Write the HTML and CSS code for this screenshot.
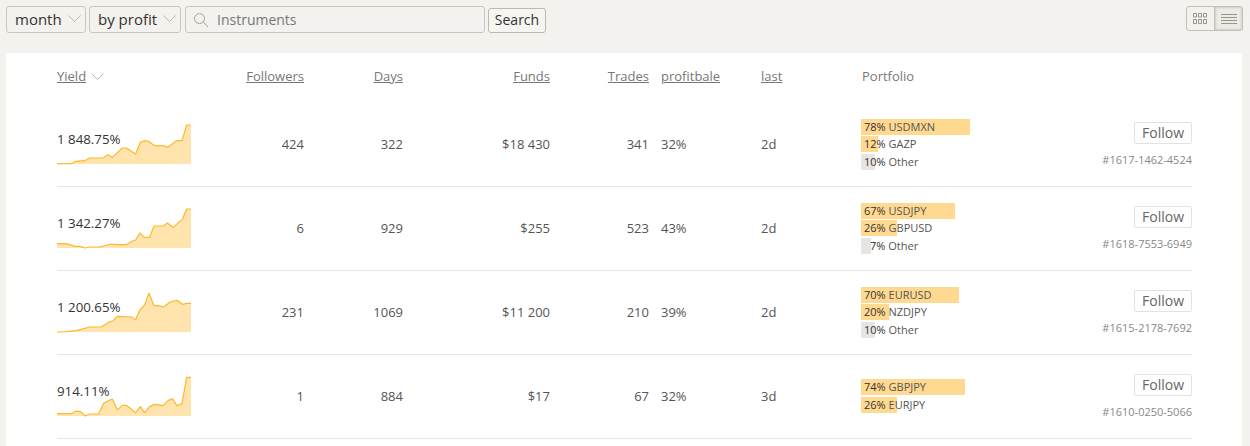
FILE: index.html
```html
<!DOCTYPE html>
<html lang="en">
<head>
<meta charset="utf-8">
<title>Traders</title>
<link rel="stylesheet" href="styles.css">
</head>
<body>
<header class="toolbar">
  <div class="select select-month">month
    <svg class="chev" viewBox="0 0 13 8"><path d="M.5.5l6 6 6-6"/></svg>
  </div>
  <div class="select select-profit">by profit
    <svg class="chev" viewBox="0 0 13 8"><path d="M.5.5l6 6 6-6"/></svg>
  </div>
  <div class="search">
    <svg class="lens" viewBox="0 0 16 16"><circle cx="6.5" cy="6.5" r="5"/><path d="M10.2 10.2l5 5"/></svg>
    <span>Instruments</span>
  </div>
  <button class="search-btn">Search</button>
  <div class="views">
    <div class="view">
      <svg viewBox="0 0 15 11" class="view-icon"><path d="M.5.5h3v3.500h-3zM5.500.5h3v3.500h-3zM10.500.5h3v3.500h-3zM.5 6.500h3v4h-3zM5.500 6.500h3v4h-3zM10.500 6.500h3v4h-3z"/></svg>
    </div>
    <div class="view view-on">
      <svg viewBox="0 0 16 10" class="view-icon view-icon-list"><path d="M0 .5h16M0 3.500h16M0 6.500h16M0 9.500h16"/></svg>
    </div>
  </div>
</header>
<main class="panel">
  <div class="grid head">
    <div><a href="#">Yield</a><svg class="chev chev-head" viewBox="0 0 13 8"><path d="M.5.5l6 6 6-6"/></svg></div>
    <div class="num"><a href="#">Followers</a></div>
    <div class="num"><a href="#">Days</a></div>
    <div class="num"><a href="#">Funds</a></div>
    <div class="num"><a href="#">Trades</a></div>
    <div class="pad"><a href="#">profitbale</a></div>
    <div><a href="#">last</a></div>
    <div class="plain">Portfolio</div>
    <div></div>
  </div>

  <div class="grid row">
    <div class="yield">
      <svg class="spark" viewBox="22 37 402 126">
        <path class="area" d="M22 163L22 162 65 162 78 155 105 153 120 145 160 145 175 135 188 143 218 115 230 115 258 133 272 98 285 93 298 96 315 108 340 108 355 113 380 93 397 93 411 46 424 46 424 163Z"/>
        <path class="line" d="M22 162 65 162 78 155 105 153 120 145 160 145 175 135 188 143 218 115 230 115 258 133 272 98 285 93 298 96 315 108 340 108 355 113 380 93 397 93 411 46 424 46"/>
      </svg>
      <span class="pct">1 848.75%</span>
    </div>
    <div class="num">424</div>
    <div class="num">322</div>
    <div class="num">$18 430</div>
    <div class="num">341</div>
    <div class="pad">32%</div>
    <div>2d</div>
    <div class="folio">
      <div class="alloc"><i class="bar" style="width:109px"></i><span><b>78%</b> USDMXN</span></div>
      <div class="alloc"><i class="bar" style="width:17px"></i><span><b>12%</b> GAZP</span></div>
      <div class="alloc"><i class="bar bar-other" style="width:14px"></i><span><b>10%</b> Other</span></div>
    </div>
    <div class="act"><button class="follow">Follow</button><span class="id">#1617-1462-4524</span></div>
  </div>

  <div class="grid row">
    <div class="yield">
      <svg class="spark" viewBox="22 33 402 126">
        <path class="area" d="M22 159L22 146 50 146 75 154 90 154 107 159 120 156 150 156 185 147 200 149 230 149 245 140 258 135 270 114 285 127 300 127 313 93 340 93 353 84 370 97 398 73 411 42 424 42 424 159Z"/>
        <path class="line" d="M22 146 50 146 75 154 90 154 107 159 120 156 150 156 185 147 200 149 230 149 245 140 258 135 270 114 285 127 300 127 313 93 340 93 353 84 370 97 398 73 411 42 424 42"/>
      </svg>
      <span class="pct">1 342.27%</span>
    </div>
    <div class="num">6</div>
    <div class="num">929</div>
    <div class="num">$255</div>
    <div class="num">523</div>
    <div class="pad">43%</div>
    <div>2d</div>
    <div class="folio">
      <div class="alloc"><i class="bar" style="width:94px"></i><span><b>67%</b> USDJPY</span></div>
      <div class="alloc"><i class="bar" style="width:36px"></i><span><b>26%</b> GBPUSD</span></div>
      <div class="alloc"><i class="bar bar-other" style="width:10px"></i><span><b class="gap">7%</b> Other</span></div>
    </div>
    <div class="act"><button class="follow">Follow</button><span class="id">#1618-7553-6949</span></div>
  </div>

  <div class="grid row">
    <div class="yield">
      <svg class="spark" viewBox="22 31 402 126">
        <path class="area" d="M22 157L22 157 50 156 80 153 120 142 155 142 180 126 190 124 203 110 245 112 258 120 270 92 285 75 298 40 313 78 325 78 342 82 358 69 372 64 383 62 398 74 411 71 424 71 424 157Z"/>
        <path class="line" d="M22 157 50 156 80 153 120 142 155 142 180 126 190 124 203 110 245 112 258 120 270 92 285 75 298 40 313 78 325 78 342 82 358 69 372 64 383 62 398 74 411 71 424 71"/>
      </svg>
      <span class="pct">1 200.65%</span>
    </div>
    <div class="num">231</div>
    <div class="num">1069</div>
    <div class="num">$11 200</div>
    <div class="num">210</div>
    <div class="pad">39%</div>
    <div>2d</div>
    <div class="folio">
      <div class="alloc"><i class="bar" style="width:98px"></i><span><b>70%</b> EURUSD</span></div>
      <div class="alloc"><i class="bar" style="width:28px"></i><span><b>20%</b> NZDJPY</span></div>
      <div class="alloc"><i class="bar bar-other" style="width:14px"></i><span><b>10%</b> Other</span></div>
    </div>
    <div class="act"><button class="follow">Follow</button><span class="id">#1615-2178-7692</span></div>
  </div>

  <div class="grid row">
    <div class="yield">
      <svg class="spark" viewBox="22 27 402 126">
        <path class="area" d="M22 153L22 146 65 146 78 139 92 139 107 153 120 147 147 147 162 115 175 108 188 102 203 135 218 121 230 121 258 143 272 125 285 143 300 125 315 118 340 122 355 107 368 101 382 122 397 116 411 37 424 37 424 153Z"/>
        <path class="line" d="M22 146 65 146 78 139 92 139 107 153 120 147 147 147 162 115 175 108 188 102 203 135 218 121 230 121 258 143 272 125 285 143 300 125 315 118 340 122 355 107 368 101 382 122 397 116 411 37 424 37"/>
      </svg>
      <span class="pct">914.11%</span>
    </div>
    <div class="num">1</div>
    <div class="num">884</div>
    <div class="num">$17</div>
    <div class="num">67</div>
    <div class="pad">32%</div>
    <div>3d</div>
    <div class="folio">
      <div class="alloc"><i class="bar" style="width:104px"></i><span><b>74%</b> GBPJPY</span></div>
      <div class="alloc"><i class="bar" style="width:36px"></i><span><b>26%</b> EURJPY</span></div>
    </div>
    <div class="act"><button class="follow">Follow</button><span class="id">#1610-0250-5066</span></div>
  </div>
</main>
</body>
</html>
```
FILE: styles.css
```css
* { box-sizing: border-box; }
html, body { margin: 0; height: 446px; overflow: hidden; }
body {
  background: #f4f2ee;
  font-family: "Open Sans", sans-serif;
  font-size: 13px;
  color: #555;
}
.toolbar {
  height: 53px;
  padding: 6px 7px 0 6px;
  display: flex;
  align-items: flex-start;
}
.select {
  height: 27px;
  border: 1px solid #c9c6be;
  border-radius: 3px;
  font-size: 15px;
  line-height: 24px;
  color: #333;
  padding-left: 8px;
  padding-bottom: 1px;
  display: flex;
  align-items: center;
  justify-content: space-between;
}
.select-month { width: 80px; margin-right: 3px; padding-right: 4px; }
.select-profit { width: 92px; margin-right: 4px; padding-right: 4px; }
.chev { width: 13px; height: 8px; fill: none; stroke: #bdb9b0; stroke-width: 1; }
.search {
  width: 300px;
  height: 27px;
  border: 1px solid #c9c6be;
  border-radius: 3px;
  display: flex;
  align-items: center;
  padding: 0 0 0 7px;
  font-size: 14px;
  line-height: 20px;
  color: #777;
}
.lens { width: 16px; height: 16px; fill: none; stroke: #a5a29a; stroke-width: 1; margin: 0 8px 0 0; }
.search-btn {
  margin: 2px 0 0 3px;
  width: 58px;
  height: 25px;
  padding: 0 0 2px;
  background: #f6f5f2;
  border: 1px solid #bdbab2;
  border-radius: 3px;
  font: 14px/20px "Open Sans", sans-serif;
  color: #333;
}
.views {
  margin-left: auto;
  display: flex;
  height: 25px;
  border: 1px solid #c4c1b9;
  border-radius: 3px;
}
.view {
  width: 27px;
  display: flex;
  align-items: center;
  justify-content: center;
}
.view-on {
  width: 28px;
  background: #ecebe6;
  border-left: 1px solid #c4c1b9;
  box-shadow: inset 0 0 3px #b5b2aa;
}
.view-icon { width: 15px; height: 11px; fill: none; stroke: #99948a; stroke-width: 1; }
.view-icon-list { width: 16px; height: 10px; }
.panel {
  margin: 0 8px 0 6px;
  background: #fff;
  padding: 0 50px 0 51px;
  height: 393px;
}
.grid {
  display: grid;
  grid-template-columns: 134px 113px 99px 147px 99px 112px 100px 201px 130px;
  align-items: center;
}
.head { height: 50px; padding-bottom: 5px; color: #777; }
.head a { color: #777; text-decoration: underline; }
.chev-head { margin-left: 5px; }
.plain { padding-left: 1px; }
.row { height: 84px; border-bottom: 1px solid #e6e6e6; padding-bottom: 1px; }
.num { text-align: right; }
.pad { padding-left: 12px; }
.yield { display: grid; align-self: start; padding-top: 19px; }
.yield > * { grid-area: 1 / 1; }
.spark { width: 134px; height: 42px; overflow: visible; display: block; }
.area { fill: #ffe4ad; }
.line { fill: none; stroke: #fdb92e; stroke-width: 3.6; stroke-linejoin: round; }
.pct { color: #333; font-size: 13.3px; margin-top: 8px; height: 18px; line-height: 18px; }
.folio { display: flex; flex-direction: column; gap: 1.5px; }
.alloc { display: grid; height: 16px; font-size: 11px; line-height: 16px; }
.alloc > * { grid-area: 1 / 1; }
.bar { height: 16px; background: #ffd98f; }
.bar-other { background: #e6e5e3; }
.alloc span { padding-left: 3px; color: #555; white-space: nowrap; }
.alloc b { font-weight: 400; color: #333; }
.alloc b.gap { margin-left: 6px; }
.act { display: flex; flex-direction: column; align-items: flex-end; gap: 8px; padding-top: 1px; }
.follow {
  width: 58px;
  height: 22px;
  padding: 0;
  background: #fff;
  border: 1px solid #e2e2e2;
  border-radius: 2px;
  font: 14px/20px "Open Sans", sans-serif;
  color: #666;
}
.id { font-size: 11px; line-height: 15px; color: #888; }
```
